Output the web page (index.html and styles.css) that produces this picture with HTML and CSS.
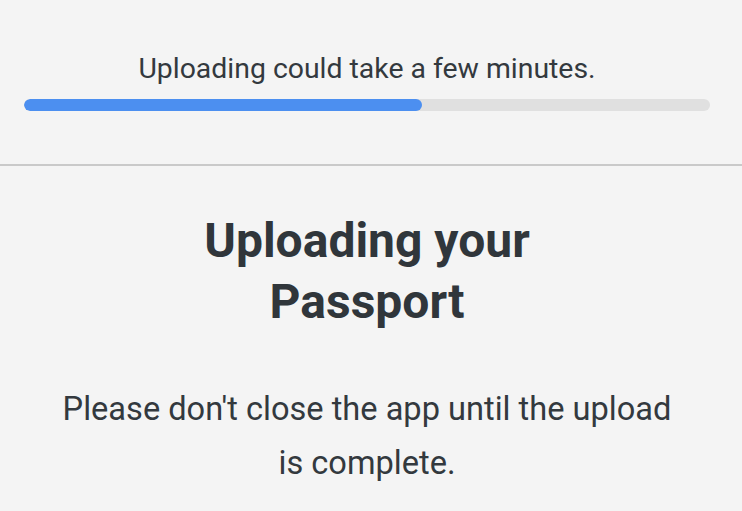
FILE: index.html
```html
<!DOCTYPE html>
<html lang="en">
<head>
    <meta charset="UTF-8">
    <meta name="viewport" content="width=device-width, initial-scale=1.0">
    <title>Uploading</title>
    <link rel="stylesheet" href="styles.css">
</head>
<body>

<!-- Barra de progresso -->
<div class="progress-area">
    <p class="progress-text">Uploading could take a few minutes.</p>
    <div class="progress-track">
        <div class="progress-fill" style="width: 58%"></div>
    </div>
</div>

<!-- Mensagem -->
<div class="message">
    <h1>Uploading your<br>Passport</h1>
    <p>Please don't close the app until the upload is complete.</p>
</div>

</body>
</html>
```

FILE: styles.css
```css
* {
    margin: 0;
    padding: 0;
    box-sizing: border-box;
    font-family: Roboto, "Liberation Sans", sans-serif;
}
body {
    background: #f4f4f4;
    color: #33393e;
    width: 742px;
    height: 511px;
    overflow: hidden;
}
.progress-area {
    height: 166px;
    padding: 51px 32px 0 24px;
    border-bottom: 2px solid #c9c9c9;
}
.progress-text {
    font-size: 28.4px;
    line-height: 36px;
    text-align: center;
}
.progress-track {
    margin-top: 12px;
    height: 12px;
    background: #e0e0e0;
    border-radius: 6px;
    overflow: hidden;
}
.progress-fill {
    height: 100%;
    background: #4c8ff0;
    border-radius: 6px;
}
.message {
    padding: 44px 64px 0 56px;
    text-align: center;
}
.message h1 {
    font-size: 48px;
    font-weight: 700;
    line-height: 61px;
    color: #30363b;
}
.message p {
    margin-top: 50px;
    font-size: 32.6px;
    line-height: 54px;
}
```
